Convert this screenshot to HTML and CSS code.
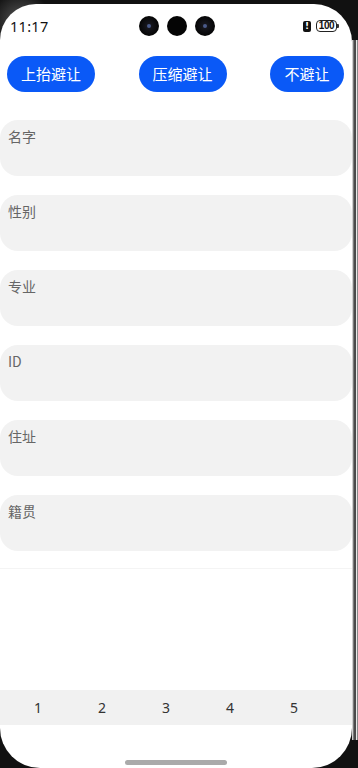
FILE: index.html
```html
<!DOCTYPE html>
<html lang="zh">
<head>
<meta charset="utf-8">
<title>避让</title>
<link rel="stylesheet" href="styles.css">
</head>
<body>
<div class="device">
  <div class="screen">
    <div class="status">
      <span class="time">11:17</span>
      <div class="cams">
        <span class="cam"><i></i></span>
        <span class="cam plain"></span>
        <span class="cam"><i></i></span>
      </div>
      <div class="sys">
        <span class="alert">!</span>
        <span class="battery"><span class="batt-body">100</span><span class="batt-tip"></span></span>
      </div>
    </div>
    <div class="btn-row">
      <button class="btn">上抬避让</button>
      <button class="btn">压缩避让</button>
      <button class="btn">不避让</button>
    </div>
    <div class="fields">
      <div class="field">名字</div>
      <div class="field">性别</div>
      <div class="field">专业</div>
      <div class="field">ID</div>
      <div class="field">住址</div>
      <div class="field">籍贯</div>
    </div>
    <div class="divider"></div>
    <div class="tabs">
      <span class="tab">1</span>
      <span class="tab">2</span>
      <span class="tab">3</span>
      <span class="tab">4</span>
      <span class="tab">5</span>
    </div>
    <div class="home"><span class="home-bar"></span></div>
  </div>
  <div class="bezel"></div>
</div>
</body>
</html>
```
FILE: styles.css
```css
html, body {
  margin: 0;
  padding: 0;
  width: 358px;
  height: 768px;
  overflow: hidden;
  background: #1b1b1b;
}
body {
  font-family: "Noto Sans", "Noto Sans CJK SC", sans-serif;
}
.device {
  display: flex;
  height: 768px;
  padding-top: 4px;
  box-sizing: border-box;
  background: radial-gradient(circle at 20px 20px, #555 0, #111 30px);
}
.screen {
  width: 352px;
  height: 764px;
  flex: none;
  background: #fff;
  border-radius: 36px 38px 40px 40px;
  overflow: hidden;
  display: flex;
  flex-direction: column;
}
.bezel {
  width: 6px;
  flex: none;
  margin-top: 36px;
  height: 700px;
  background: linear-gradient(to right, #cfcfcf 0, #cfcfcf 1px, #7a7a7a 1px, #7a7a7a 2px, #4a4a4a 2px, #4a4a4a 4px, #e8e8e8 4px, #e8e8e8 5px, #8a8a8a 5px);
}
.status {
  height: 44px;
  flex: none;
  display: grid;
  grid-template-columns: 1fr auto 1fr;
  align-items: center;
}
.time {
  padding-left: 10px;
  font-family: "Noto Sans", sans-serif;
  font-size: 14.5px;
  font-weight: 400;
  color: #111;
  letter-spacing: 0.3px;
}
.cams {
  display: flex;
  gap: 8px;
  padding-left: 1px;
}
.cam {
  width: 20px;
  height: 20px;
  border-radius: 50%;
  background: radial-gradient(circle at 50% 50%, #1b1b24 0, #050505 70%);
  display: flex;
  align-items: center;
  justify-content: center;
}
.cam.plain {
  background: #050505;
}
.cam i {
  width: 4px;
  height: 4px;
  border-radius: 50%;
  background: #4a5a8a;
}
.sys {
  display: flex;
  align-items: center;
  justify-content: flex-end;
  gap: 5px;
  padding-right: 13px;
}
.alert {
  width: 8px;
  height: 11px;
  background: #111;
  border-radius: 2px;
  color: #fff;
  font-size: 9px;
  font-weight: 700;
  line-height: 11px;
  text-align: center;
  font-family: "DejaVu Sans", sans-serif;
}
.battery {
  display: flex;
  align-items: center;
}
.batt-body {
  width: 21px;
  height: 12px;
  box-sizing: border-box;
  border: 1.3px solid #222;
  border-radius: 4px;
  font-family: "Liberation Sans", sans-serif;
  font-size: 10px;
  font-weight: 700;
  line-height: 10px;
  text-align: center;
  color: #111;
  letter-spacing: -0.4px;
}
.batt-tip {
  width: 2px;
  height: 4px;
  background: #333;
  border-radius: 0 1px 1px 0;
}
.btn-row {
  flex: none;
  display: flex;
  justify-content: space-between;
  padding: 0 8px 0 7px;
  margin-top: 8px;
}
.btn {
  height: 36px;
  border: none;
  border-radius: 18px;
  background: #0a59f7;
  color: #fff;
  font-family: "Noto Sans CJK SC", sans-serif;
  font-size: 15px;
  padding: 0;
  width: 88px;
  line-height: 36px;
}
.btn:last-child {
  width: 74px;
}
.fields {
  flex: none;
  display: flex;
  flex-direction: column;
  gap: 19px;
  margin-top: 28px;
}
.field {
  height: 56px;
  box-sizing: border-box;
  background: #f2f2f2;
  border-radius: 18px;
  padding: 6px 0 0 8px;
  font-family: "Noto Sans CJK SC", sans-serif;
  font-size: 14px;
  line-height: 20px;
  color: #666;
}
.divider {
  flex: none;
  height: 1px;
  background: #f4f4f4;
  margin-top: 17px;
}
.tabs {
  flex: none;
  margin-top: auto;
  height: 35px;
  background: #f1f1f1;
  display: flex;
  align-items: center;
  padding-left: 6px;
}
.tab {
  width: 64px;
  text-align: center;
  font-family: "Noto Sans", sans-serif;
  font-size: 14px;
  color: #333;
}
.home {
  flex: none;
  height: 43px;
  display: flex;
  justify-content: center;
  padding-top: 35px;
  box-sizing: border-box;
}
.home-bar {
  width: 102px;
  height: 5px;
  border-radius: 3px;
  background: #aaa;
}
```
